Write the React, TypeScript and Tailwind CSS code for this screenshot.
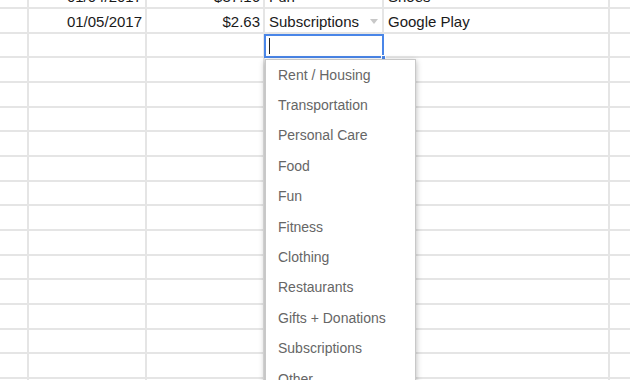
import React from "react";

const rows: string[][] = [
  ["", "01/04/2017", "$37.16", "Fun", "Shoes", ""],
  ["", "01/05/2017", "$2.63", "Subscriptions", "Google Play", ""],
  ...Array.from({ length: 15 }, () => ["", "", "", "", "", ""]),
];

const items = [
  "Rent / Housing",
  "Transportation",
  "Personal Care",
  "Food",
  "Fun",
  "Fitness",
  "Clothing",
  "Restaurants",
  "Gifts + Donations",
  "Subscriptions",
  "Other",
];

export default function App() {
  return (
    <div
      className="relative w-[630px] h-[380px] overflow-hidden bg-white text-[15px] text-[#1a1a1a]"
      style={{ fontFamily: '"Liberation Sans", Arial, sans-serif' }}
    >
      <div className="mt-[-15.67px] flex flex-col">
        {rows.map((r, i) => (
          <div key={i} className="flex h-[24.67px] shrink-0 border-b-2 border-[#e5e5e5]">
            <div className="w-[29px] shrink-0 border-r-2 border-[#e5e5e5]" />
            <div className="w-[118px] shrink-0 border-r-2 border-[#e5e5e5] flex items-center justify-end pr-[3px] pt-[3px] whitespace-nowrap">
              {r[1]}
            </div>
            <div className="w-[118px] shrink-0 border-r-2 border-[#e5e5e5] flex items-center justify-end pr-[3px] pt-[3px] whitespace-nowrap">
              {r[2]}
            </div>
            <div className="relative w-[119px] shrink-0 border-r-2 border-[#e5e5e5] flex items-center pl-[4px] pt-[3px] whitespace-nowrap">
              {r[3]}
              {r[3] && i === 1 && (
                <span className="absolute right-[4px] top-[10px] w-0 h-0 border-l-[4px] border-r-[4px] border-t-[5px] border-l-transparent border-r-transparent border-t-[#c8c8c8]" />
              )}
            </div>
            <div className="w-[226px] shrink-0 border-r-2 border-[#e5e5e5] flex items-center pl-[4px] pt-[3px] whitespace-nowrap">
              {r[4]}
            </div>
            <div className="flex-1" />
          </div>
        ))}
      </div>

      {/* active cell editor */}
      <div className="absolute left-[264px] top-[34px] w-[120px] h-[24px] border-2 border-[#4a86e8] bg-white">
        <div className="absolute left-[3px] top-[2px] w-[1px] h-[16px] bg-[#222]" />
        <div className="absolute right-[-4px] bottom-[-4px] w-[5px] h-[5px] bg-[#4a86e8] border border-white" />
      </div>

      {/* dropdown */}
      <div className="absolute left-[265px] top-[59px] w-[151px] h-[360px] bg-white border border-[#c8c8c8] shadow-[0_2px_6px_rgba(0,0,0,0.3)] flex flex-col text-[14px] text-[#666]">
        {items.map((t) => (
          <div key={t} className="h-[30.4px] shrink-0 flex items-center pl-[12px] whitespace-nowrap">
            {t}
          </div>
        ))}
      </div>
    </div>
  );
}
